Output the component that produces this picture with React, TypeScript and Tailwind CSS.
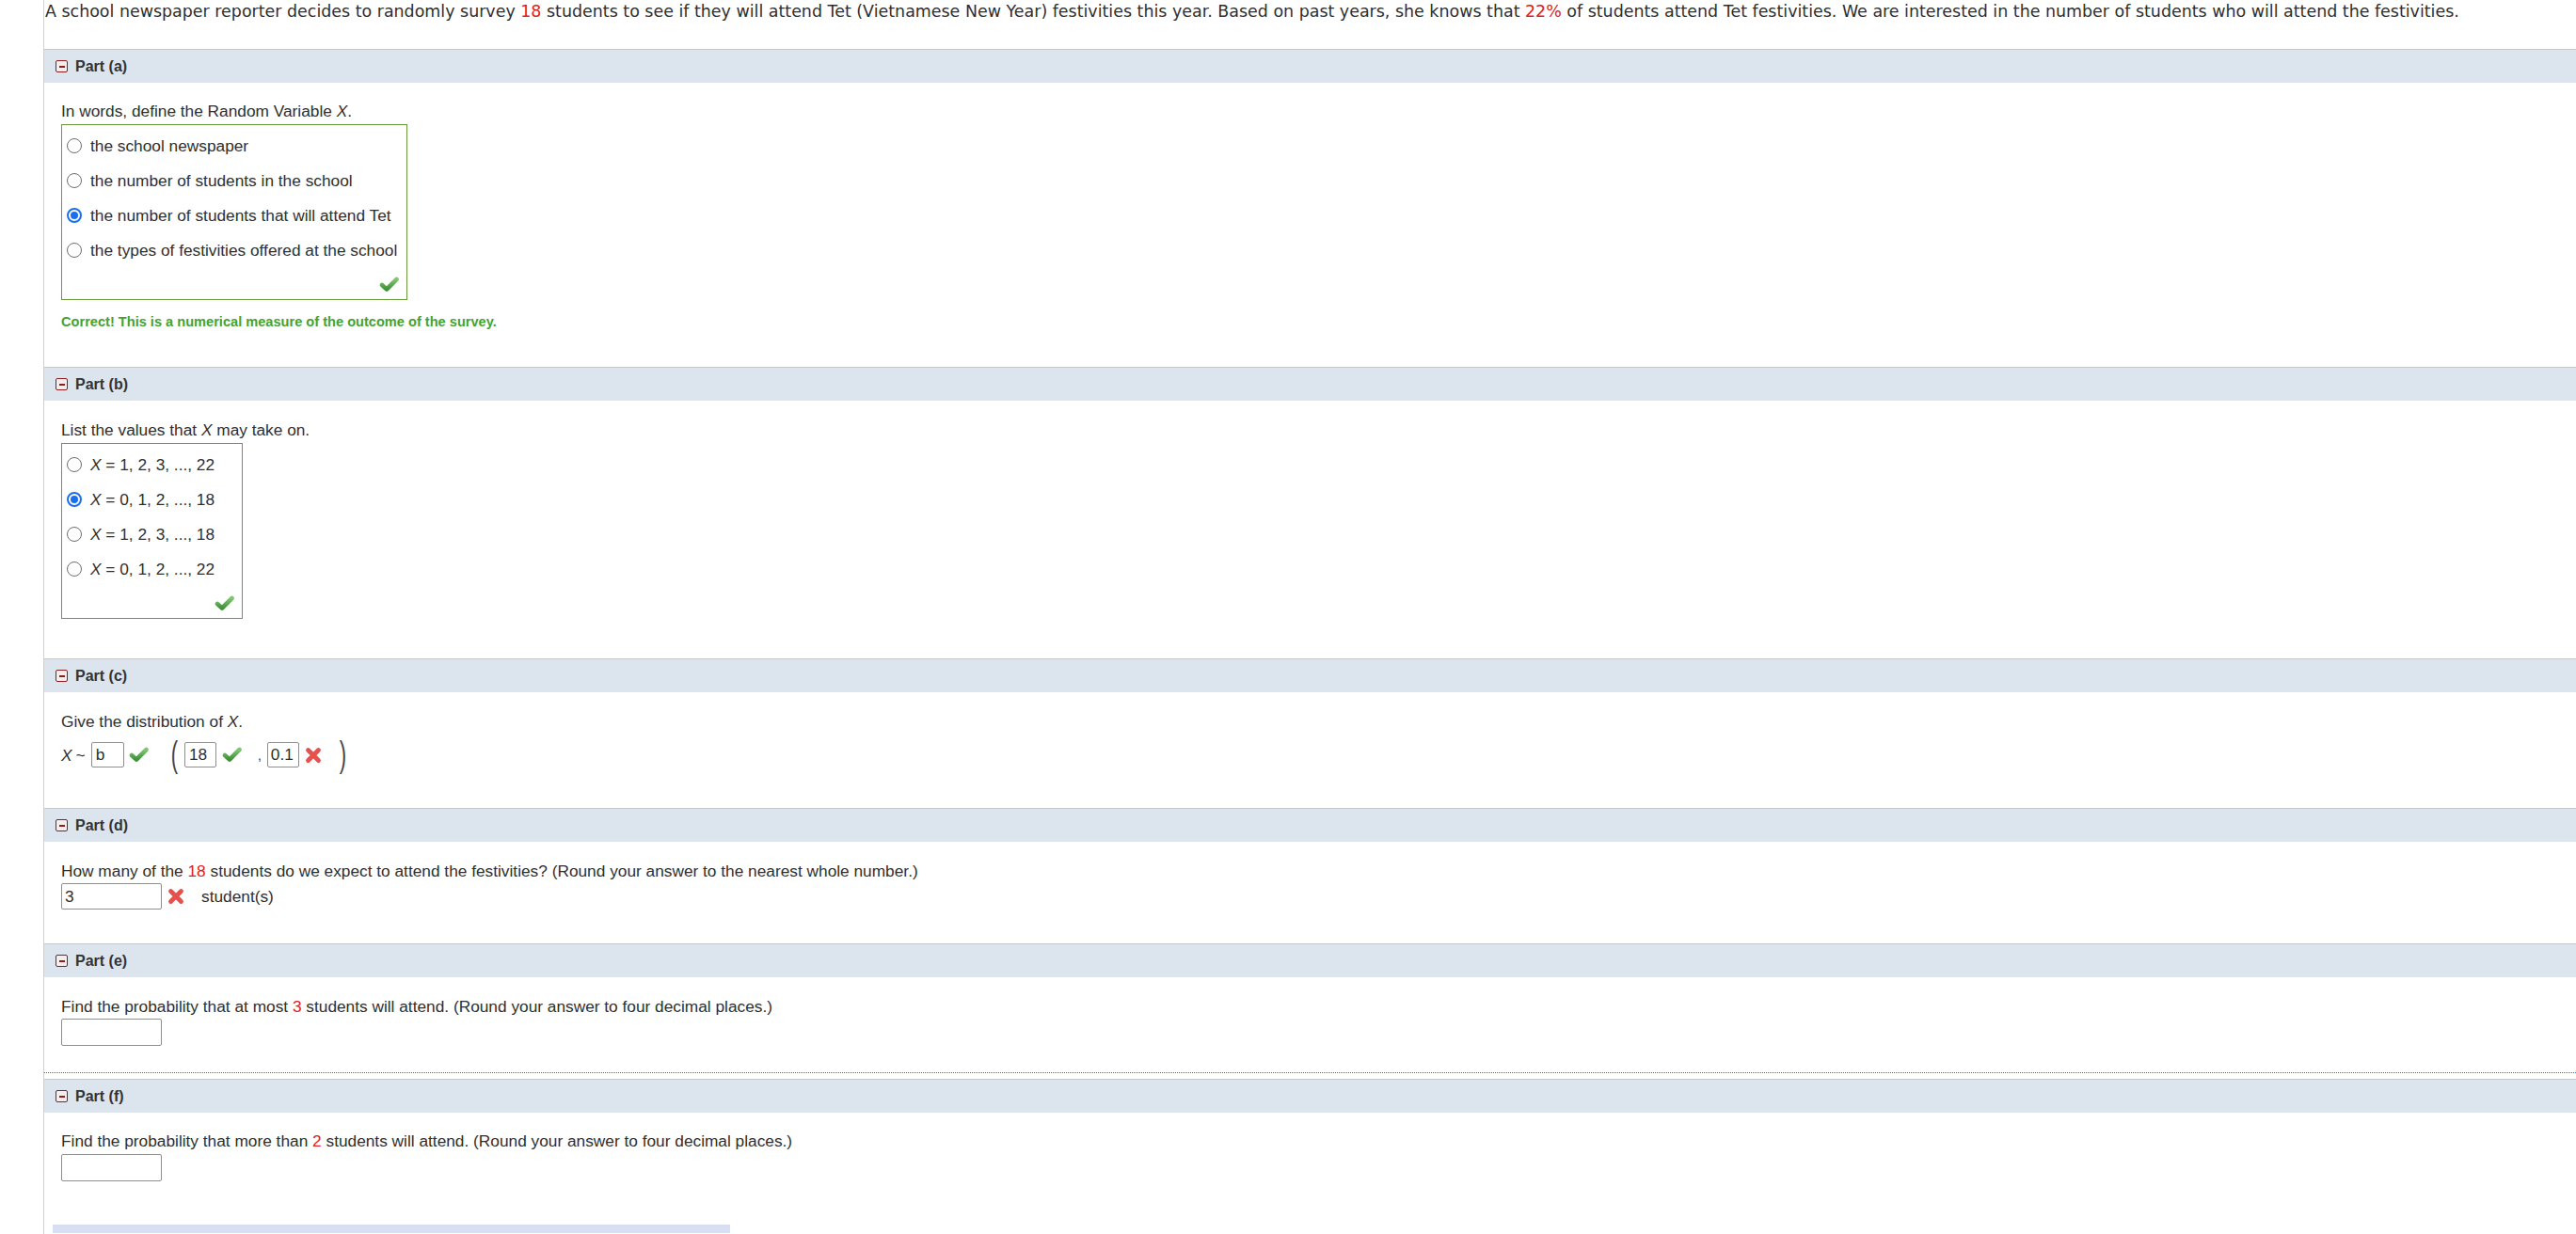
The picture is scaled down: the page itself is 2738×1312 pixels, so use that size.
import React from "react";

function MinusIcon() {
  return (
    <span className="flex h-[13px] w-[13px] items-center justify-center rounded-[2px] border-[1.5px] border-[#8b1e1e] bg-[#f6ecec]">
      <span className="h-[2px] w-[6px] bg-[#8b1e1e]" />
    </span>
  );
}

function PartHeader({ label }: { label: string }) {
  return (
    <div className="flex h-[36px] items-center gap-[8px] border-t border-[#c8c8c8] bg-[#dce5ee] pl-[12px]">
      <MinusIcon />
      <span className="text-[16px] font-bold text-[#333]">{label}</span>
    </div>
  );
}

function Radio({ checked }: { checked?: boolean }) {
  if (checked) {
    return (
      <span className="flex h-[16px] w-[16px] shrink-0 items-center justify-center rounded-full border-2 border-[#1a6ff0] bg-white">
        <span className="h-[8px] w-[8px] rounded-full bg-[#1a6ff0]" />
      </span>
    );
  }
  return <span className="h-[16px] w-[16px] shrink-0 rounded-full border border-[#6e6e6e] bg-white" />;
}

function Check() {
  return (
    <svg width="21" height="17" viewBox="0 0 21 17" className="shrink-0">
      <defs>
        <linearGradient id="chk" x1="0" y1="0" x2="0" y2="1">
          <stop offset="0" stopColor="#80c872" />
          <stop offset="1" stopColor="#3e9238" />
        </linearGradient>
      </defs>
      <path d="M3 9 L8 13.5 L18.5 3" fill="none" stroke="url(#chk)" strokeWidth="4.6" strokeLinejoin="round" strokeLinecap="round" />
    </svg>
  );
}

function Cross() {
  return (
    <svg width="18" height="18" viewBox="0 0 18 18" className="shrink-0">
      <path d="M3.5 3.5 L14.5 14.5 M14.5 3.5 L3.5 14.5" fill="none" stroke="#e5514d" strokeWidth="4.8" strokeLinecap="round" />
    </svg>
  );
}

type Option = { label: React.ReactNode; checked?: boolean };

function ChoiceBox({ options, width }: { options: Option[]; width: string }) {
  return (
    <div className={`mt-[4px] border border-[#6a9c3c] pt-[3px] ${width}`}>
      {options.map((o, i) => (
        <div key={i} className="flex h-[37px] items-center gap-[9px] pl-[5px] whitespace-nowrap">
          <Radio checked={o.checked} />
          <span>{o.label}</span>
        </div>
      ))}
      <div className="flex h-[34px] items-end justify-end pb-[7px] pr-[8px]">
        <Check />
      </div>
    </div>
  );
}

const Red = ({ children }: { children: React.ReactNode }) => (
  <span className="text-[#e0201c]">{children}</span>
);

const X = () => <i>X</i>;

export default function App() {
  return (
    <div className="h-[1312px] overflow-hidden bg-white font-['Liberation_Sans',Arial,sans-serif] text-[17.3px] leading-[20px] text-[#2f2f2f]">
      <div className="ml-[46px] h-[1312px] border-l border-[#d0d0d0]">
        <p className="whitespace-nowrap pl-[1px] pt-[2px] font-['DejaVu_Sans',Verdana,sans-serif] text-[17.45px] leading-[21px]">
          A school newspaper reporter decides to randomly survey <Red>18</Red> students to see if they will attend Tet
          (Vietnamese New Year) festivities this year. Based on past years, she knows that <Red>22%</Red> of students
          attend Tet festivities. We are interested in the number of students who will attend the festivities.
        </p>

        {/* Part (a) */}
        <div className="mt-[29px]">
          <PartHeader label="Part (a)" />
          <div className="pb-[38px] pl-[18px] pt-[20px]">
            <p>
              In words, define the Random Variable <X />.
            </p>
            <ChoiceBox
              width="w-[368px]"
              options={[
                { label: "the school newspaper" },
                { label: "the number of students in the school" },
                { label: "the number of students that will attend Tet", checked: true },
                { label: "the types of festivities offered at the school" },
              ]}
            />
            <p className="mt-[13px] text-[14.6px] font-bold text-[#44a32f]">
              Correct! This is a numerical measure of the outcome of the survey.
            </p>
          </div>
        </div>

        {/* Part (b) */}
        <PartHeader label="Part (b)" />
        <div className="pb-[42px] pl-[18px] pt-[21px]">
          <p>
            List the values that <X /> may take on.
          </p>
          <ChoiceBox
            width="w-[193px]"
            options={[
              { label: <><X /> = 1, 2, 3, ..., 22</> },
              { label: <><X /> = 0, 1, 2, ..., 18</>, checked: true },
              { label: <><X /> = 1, 2, 3, ..., 18</> },
              { label: <><X /> = 0, 1, 2, ..., 22</> },
            ]}
          />
        </div>

        {/* Part (c) */}
        <PartHeader label="Part (c)" />
        <div className="pb-[38px] pl-[18px] pt-[21px]">
          <p>
            Give the distribution of <X />.
          </p>
          <div className="mt-[7px] flex h-[37px] items-center">
            <X />
            <span className="ml-[4px]">~</span>
            <input readOnly value="b" className="ml-[6px] h-[27px] w-[35px] rounded-[2px] border border-[#8f8f8f] px-[4px] outline-none" />
            <span className="ml-[5px]"><Check /></span>
            <span className="ml-[24px] inline-block scale-y-[1.75] text-[22px] font-light leading-none text-[#444]">(</span>
            <input readOnly value="18" className="ml-[7px] h-[27px] w-[34px] rounded-[2px] border border-[#8f8f8f] px-[4px] outline-none" />
            <span className="ml-[6px]"><Check /></span>
            <span className="ml-[17px] text-[14px]">,</span>
            <input readOnly value="0.1" className="ml-[6px] h-[27px] w-[34px] rounded-[2px] border border-[#8f8f8f] px-[3px] outline-none" />
            <span className="ml-[6px]"><Cross /></span>
            <span className="ml-[19px] inline-block scale-y-[1.75] text-[22px] font-light leading-none text-[#444]">)</span>
          </div>
        </div>

        {/* Part (d) */}
        <PartHeader label="Part (d)" />
        <div className="pb-[36px] pl-[18px] pt-[21px]">
          <p>
            How many of the <Red>18</Red> students do we expect to attend the festivities? (Round your answer to the
            nearest whole number.)
          </p>
          <div className="mt-[3px] flex items-center">
            <input readOnly value="3" className="h-[28px] w-[107px] rounded-[2px] border border-[#8f8f8f] px-[3px] outline-none" />
            <span className="ml-[6px]"><Cross /></span>
            <span className="ml-[18px]">student(s)</span>
          </div>
        </div>

        {/* Part (e) */}
        <PartHeader label="Part (e)" />
        <div className="border-b border-dotted border-[#2f6fd6] pb-[28px] pl-[18px] pt-[21px]">
          <p>
            Find the probability that at most <Red>3</Red> students will attend. (Round your answer to four decimal places.)
          </p>
          <input readOnly className="mt-[3px] block h-[29px] w-[107px] rounded-[2px] border border-[#8f8f8f] px-[3px] outline-none" />
        </div>

        {/* Part (f) */}
        <div className="mt-[6px]">
          <PartHeader label="Part (f)" />
          <div className="pl-[18px] pt-[20px]">
            <p>
              Find the probability that more than <Red>2</Red> students will attend. (Round your answer to four decimal
              places.)
            </p>
            <input readOnly className="mt-[4px] block h-[29px] w-[107px] rounded-[2px] border border-[#8f8f8f] px-[3px] outline-none" />
          </div>
          <div className="ml-[9px] mt-[46px] h-[9px] w-[720px] bg-[#d8dff3]" />
        </div>
      </div>
    </div>
  );
}
